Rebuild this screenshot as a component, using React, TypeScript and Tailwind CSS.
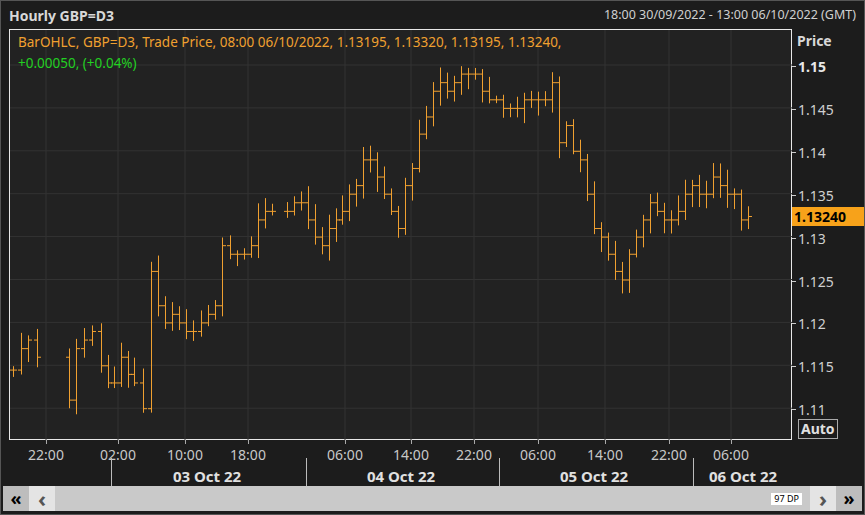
import React from "react";

const closes: [number, number][] = [
[12,1.1145],[20,1.117],[27,1.118],[36,1.116],
[68,1.111],[75,1.117],[83,1.118],[91,1.119],[100,1.115],[107,1.113],[113,1.113],[120,1.116],[127,1.114],[133,1.113],[142,1.110],[150,1.126],[157,1.122],[164,1.120],[171,1.121],[178,1.120],[185,1.119],[192,1.119],[200,1.120],[207,1.121],[214,1.122],[221,1.129],[229,1.128],[236,1.128],[243,1.128],[250,1.129],[257,1.132],[264,1.133],[271,1.133],[286,1.133],[293,1.134],[300,1.134],[307,1.132],[314,1.130],[321,1.129],[328,1.131],[335,1.132],[341,1.133],[348,1.135],[355,1.136],[362,1.139],[369,1.139],[376,1.137],[383,1.135],[390,1.133],[397,1.131],[404,1.136],[411,1.138],[418,1.142],[425,1.144],[432,1.147],[439,1.148],[446,1.147],[453,1.148],[460,1.149],[467,1.149],[474,1.149],[481,1.147],[488,1.146],[495,1.146],[502,1.145],[509,1.145],[516,1.145],[523,1.146],[530,1.146],[537,1.146],[544,1.146],[551,1.148],[558,1.141],[565,1.143],[572,1.140],[579,1.139],[586,1.135],[593,1.131],[600,1.130],[607,1.128],[614,1.126],[621,1.125],[628,1.128],[635,1.130],[642,1.132],[649,1.134],[656,1.133],[663,1.132],[670,1.132],[677,1.133],[684,1.135],[691,1.136],[698,1.135],[705,1.135],[712,1.137],[719,1.136],[726,1.135],[733,1.135],[740,1.132],[747,1.1324]];

const py = (p: number) => 64 + ((1.15 - p) / 0.005) * 42.9 - 29;
const prices = ["1.15","1.145","1.14","1.135","1.13","1.125","1.12","1.115","1.11"];
const times: [number, string][] = [[45,"22:00"],[117,"02:00"],[184,"10:00"],[247,"18:00"],[344,"06:00"],[410,"14:00"],[473,"22:00"],[537,"06:00"],[604,"14:00"],[668,"22:00"],[730,"06:00"]];
const dates: [number, string][] = [[206,"03 Oct 22"],[400,"04 Oct 22"],[593,"05 Oct 22"],[742,"06 Oct 22"]];
const dividers = [110, 305, 498, 692];

function rnd(i: number) { const s = Math.sin(i * 12.9898) * 43758.5453; return s - Math.floor(s); }

export default function App() {
  return (
    <div className="w-[865px] h-[515px] bg-[#1c1c1c] border border-[#555] flex flex-col font-['DejaVu_Sans'] overflow-hidden">
      <div className="h-[28px] flex items-center justify-between px-2 shrink-0">
        <span className="text-[#d8d8d8] font-bold text-[14px]">Hourly GBP=D3</span>
        <span className="text-[#d0d0d0] text-[12.5px]">18:00 30/09/2022 - 13:00 06/10/2022 (GMT)</span>
      </div>
      <div className="flex h-[411px] shrink-0">
        <div className="ml-[8px] w-[783px] relative bg-[#222222] border border-[#e8e8e8]">
          <svg width="782" height="411" className="absolute left-0 top-0">
            {prices.map((p) => <line key={p} x1={0} x2={782} y1={py(+p)} y2={py(+p)} stroke="#333" />)}
            {times.map(([x]) => <line key={x} x1={x - 9} x2={x - 9} y1={0} y2={411} stroke="#333" />)}
            {closes.map(([x, c], i) => {
              const o = i > 0 ? closes[i - 1][1] : c;
              const hi = Math.max(o, c) + 0.0004 + rnd(i) * 0.0015;
              const lo = Math.min(o, c) - 0.0004 - rnd(i + 50) * 0.0015;
              const X = x - 9;
              return (
                <g key={i} stroke="#f0a030" strokeWidth={1}>
                  <line x1={X + 0.5} x2={X + 0.5} y1={py(hi)} y2={py(lo)} />
                  <line x1={X - 3} x2={X + 0.5} y1={py(o) + 0.5} y2={py(o) + 0.5} />
                  <line x1={X + 0.5} x2={X + 4} y1={py(c) + 0.5} y2={py(c) + 0.5} />
                </g>
              );
            })}
          </svg>
          <div className="absolute left-[8px] top-[2px] text-[13.5px] leading-[21px]">
            <div className="text-[#f0a030]">BarOHLC, GBP=D3, Trade Price, 08:00 06/10/2022, 1.13195, 1.13320, 1.13195, 1.13240,</div>
            <div className="text-[#22d022]">+0.00050, (+0.04%)</div>
          </div>
        </div>
        <div className="flex-1 relative">
          <div className="absolute left-[5px] top-[1px] text-[#d8d8d8] font-bold text-[14px]">Price</div>
          {prices.map((p) => (
            <div key={p} className="absolute left-0 flex items-center" style={{ top: py(+p) - 8 }}>
              <div className="w-[4px] h-px bg-[#ccc]" />
              <span className={`ml-[2px] text-[14px] ${p === "1.15" ? "font-bold text-[#e8e8e8]" : "text-[#cfcfcf]"}`}>{p}</span>
            </div>
          ))}
          <div className="absolute left-0 top-[178px] h-[19px] w-[73px] bg-[#f7a21a] text-black font-bold text-[14px] leading-[19px] pl-[2px]">1.13240</div>
          <div className="absolute left-[6px] top-[390px] h-[20px] px-[2px] border border-[#aaa] text-[#e0e0e0] font-bold text-[14px] leading-[18px]">Auto</div>
        </div>
      </div>
      <div className="h-[46px] relative shrink-0">
        {times.map(([x, t]) => (
          <React.Fragment key={x}>
            <div className="absolute top-0 w-px h-[4px] bg-[#aaa]" style={{ left: x }} />
            <span className="absolute top-[4px] text-[14px] text-[#c8c8c8] -translate-x-1/2" style={{ left: x }}>{t}</span>
          </React.Fragment>
        ))}
        {dividers.map((x) => <div key={x} className="absolute top-[18px] w-px h-[28px] bg-[#bbb]" style={{ left: x }} />)}
        {dates.map(([x, d]) => (
          <span key={d} className="absolute top-[25px] text-[15px] font-bold text-[#e0e0e0] -translate-x-1/2" style={{ left: x }}>{d}</span>
        ))}
      </div>
      <div className="h-[25px] bg-[#c9c9c9] flex items-center shrink-0 mx-[2px]">
        <div className="w-[26px] h-full bg-[#bdbdbd] flex items-center justify-center text-[18px] font-bold text-black">«</div>
        <div className="w-[26px] h-full bg-[#e4e4e4] flex items-center justify-center text-[22px] font-bold text-[#555]">‹</div>
        <div className="flex-1" />
        <div className="bg-white text-[9px] text-black px-[3px] leading-[12px] mr-[8px]">97 DP</div>
        <div className="w-[26px] h-full bg-[#e4e4e4] flex items-center justify-center text-[22px] font-bold text-[#555]">›</div>
        <div className="w-[26px] h-full bg-[#bdbdbd] flex items-center justify-center text-[18px] font-bold text-black">»</div>
      </div>
    </div>
  );
}
